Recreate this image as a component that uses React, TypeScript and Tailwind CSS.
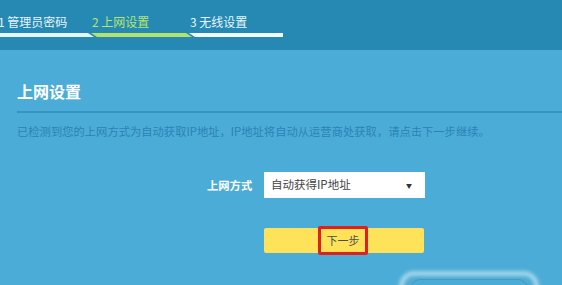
const font = { fontFamily: '"Noto Sans CJK SC", "Liberation Sans", sans-serif' };

const steps = [
  { label: '1 管理员密码', active: false },
  { label: '2 上网设置', active: true },
  { label: '3 无线设置', active: false },
];

export default function App() {
  return (
    <div style={font} className="relative w-[562px] h-[285px] overflow-hidden bg-[#4badd7]">
      {/* Step header */}
      <div className="h-[50px] bg-[#2689b3] pt-[13px]">
        <div className="flex h-[18px] text-[12px] leading-[18px]">
          {steps.map((s, i) => (
            <div
              key={i}
              className={`${i === 0 ? 'w-[94px] -ml-[2px]' : 'w-[98px]'} ${s.active ? 'text-[#b5e66e]' : 'text-[#e9f6fb]'}`}
            >
              {s.label}
            </div>
          ))}
        </div>
        <div className="flex h-[4px] mt-[2px]">
          <div className="w-[94px] bg-[#e6f5fb] [clip-path:polygon(0_0,calc(100%_-_6px)_0,100%_100%,0_100%)]" />
          <div className="-ml-[3px] w-[101px] bg-[#b3e36b] [clip-path:polygon(0_0,calc(100%_-_6px)_0,100%_100%,6px_100%)]" />
          <div className="-ml-[3px] w-[94px] bg-[#f2fafd] [clip-path:polygon(0_0,100%_0,100%_100%,6px_100%)]" />
        </div>
      </div>

      {/* Content */}
      <div className="pt-[30px]">
        <h2 className="px-[17px] text-[16px] leading-[22px] font-bold text-white">上网设置</h2>
        <div className="ml-[17px] mt-[9px] h-[2px] bg-[#3593c3]" />
        <p className="px-[17px] mt-[10px] text-[11.3px] leading-[16px] text-[#2c82b6]">
          已检测到您的上网方式为自动获取IP地址，IP地址将自动从运营商处获取，请点击下一步继续。
        </p>

        <div className="flex items-center mt-[33px] pl-[207px]">
          <span className="w-[57px] text-[11.3px] font-bold text-white">上网方式</span>
          <div className="flex items-center justify-between w-[161px] h-[26px] bg-white px-[7px]">
            <span className="text-[11.5px] text-[#444]">自动获得IP地址</span>
            <span className="mr-[6px] text-[6px] text-[#333]">▼</span>
          </div>
        </div>

        <div className="flex items-center mt-[30px] ml-[264px] w-[160px] h-[25px] bg-[#fde25a] rounded-[2px]">
          <div className="ml-[54px] w-[50px] h-[29px] flex items-center justify-center border-[3px] border-[#e01f1f] rounded-[2px]">
            <span className="text-[11px] text-[#4d4d4d]">下一步</span>
          </div>
        </div>
      </div>

      {/* Decorative cloud */}
      <div className="absolute left-[400px] top-[272px] w-[138px] h-[30px] rounded-t-[14px] border-[3px] border-white/80 blur-[2px]" />
      <div className="absolute left-[410px] top-[279px] w-[118px] h-[20px] rounded-t-[10px] border-t-[1px] border-x-[1px] border-[#4f8fa8]/70" />
    </div>
  );
}
